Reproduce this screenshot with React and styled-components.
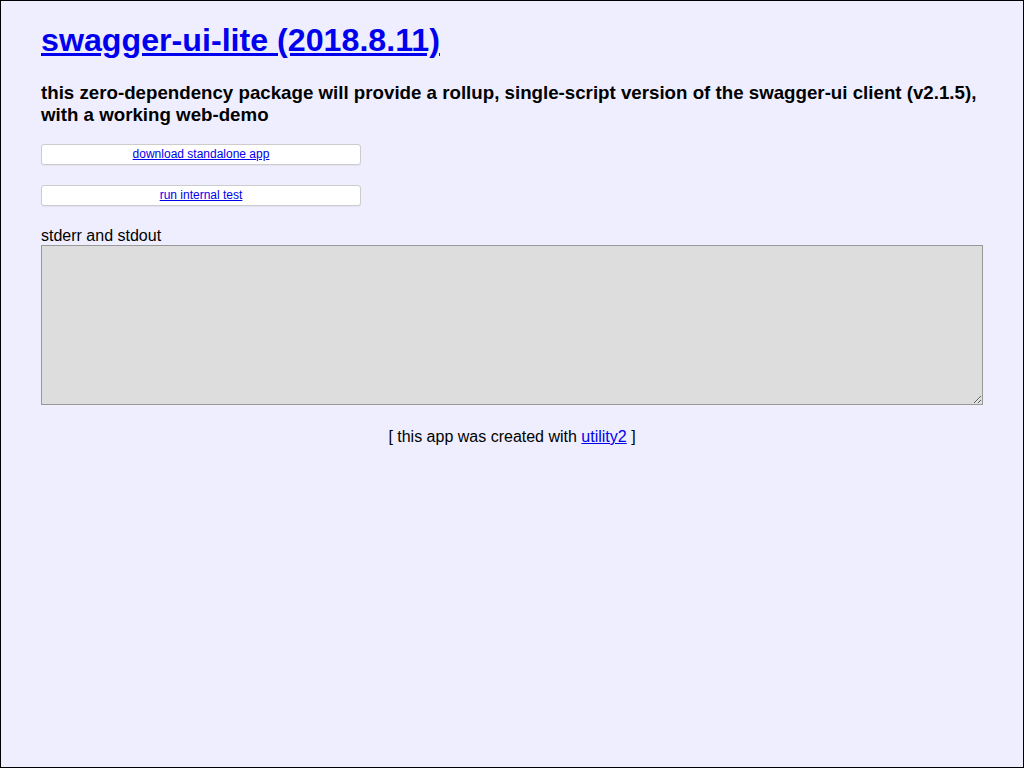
import React from "react";
import styled, { createGlobalStyle } from "styled-components";

const GlobalStyle = createGlobalStyle`
  html, body {
    margin: 0;
    padding: 0;
    height: 100%;
  }
  body {
    background: #eef;
    font-family: "Liberation Sans", Arial, Helvetica, sans-serif;
    font-size: 16px;
  }
  #root {
    height: 100%;
  }
`;

const Page = styled.div`
  box-sizing: border-box;
  min-height: 100%;
  border: 1px solid #000;
  padding: 0 40px;
  overflow: hidden;
`;

const Title = styled.h1`
  font-size: 32.2px;
  font-weight: bold;
  margin: 21px 0;
  a {
    color: #0000ee;
    text-decoration: underline;
  }
`;

const Lead = styled.h3`
  font-size: 18.72px;
  font-weight: bold;
  margin: 23px 0 0;
  line-height: 22px;
  color: #000;
`;

const ButtonBox = styled.div`
  box-sizing: border-box;
  width: 320px;
  height: 21px;
  margin-top: ${({ $first }) => ($first ? "18px" : "20px")};
  padding-bottom: 2px;
  background: #fff;
  border: 1px solid #ccc;
  border-radius: 3px;
  box-shadow: 0 1px 1px rgba(0, 0, 0, 0.05);
  display: flex;
  align-items: center;
  justify-content: center;
  font-size: 12px;
  a {
    color: #0000ee;
    text-decoration: underline;
  }
`;

const Label = styled.div`
  margin-top: 20px;
  font-size: 16px;
  line-height: 19px;
  color: #000;
`;

const Output = styled.textarea`
  display: block;
  box-sizing: border-box;
  width: 100%;
  height: 160px;
  margin: 0;
  background: #ddd;
  border: 1px solid #999;
  font-family: "Liberation Mono", monospace;
  resize: both;
`;

const Footer = styled.div`
  margin-top: 23px;
  text-align: center;
  font-size: 16px;
  line-height: 18px;
  color: #000;
  a {
    color: #0000ee;
  }
`;

export default function App() {
  return (
    <>
      <GlobalStyle />
      <Page>
        <Title>
          <a href="#">swagger-ui-lite (2018.8.11)</a>
        </Title>
        <Lead>
          this zero-dependency package will provide a rollup, single-script version of the
          swagger-ui client (v2.1.5), with a working web-demo
        </Lead>
        <ButtonBox $first>
          <a href="#">download standalone app</a>
        </ButtonBox>
        <ButtonBox>
          <a href="#">run internal test</a>
        </ButtonBox>
        <Label>stderr and stdout</Label>
        <Output readOnly />
        <Footer>
          [ this app was created with <a href="#">utility2</a> ]
        </Footer>
      </Page>
    </>
  );
}
